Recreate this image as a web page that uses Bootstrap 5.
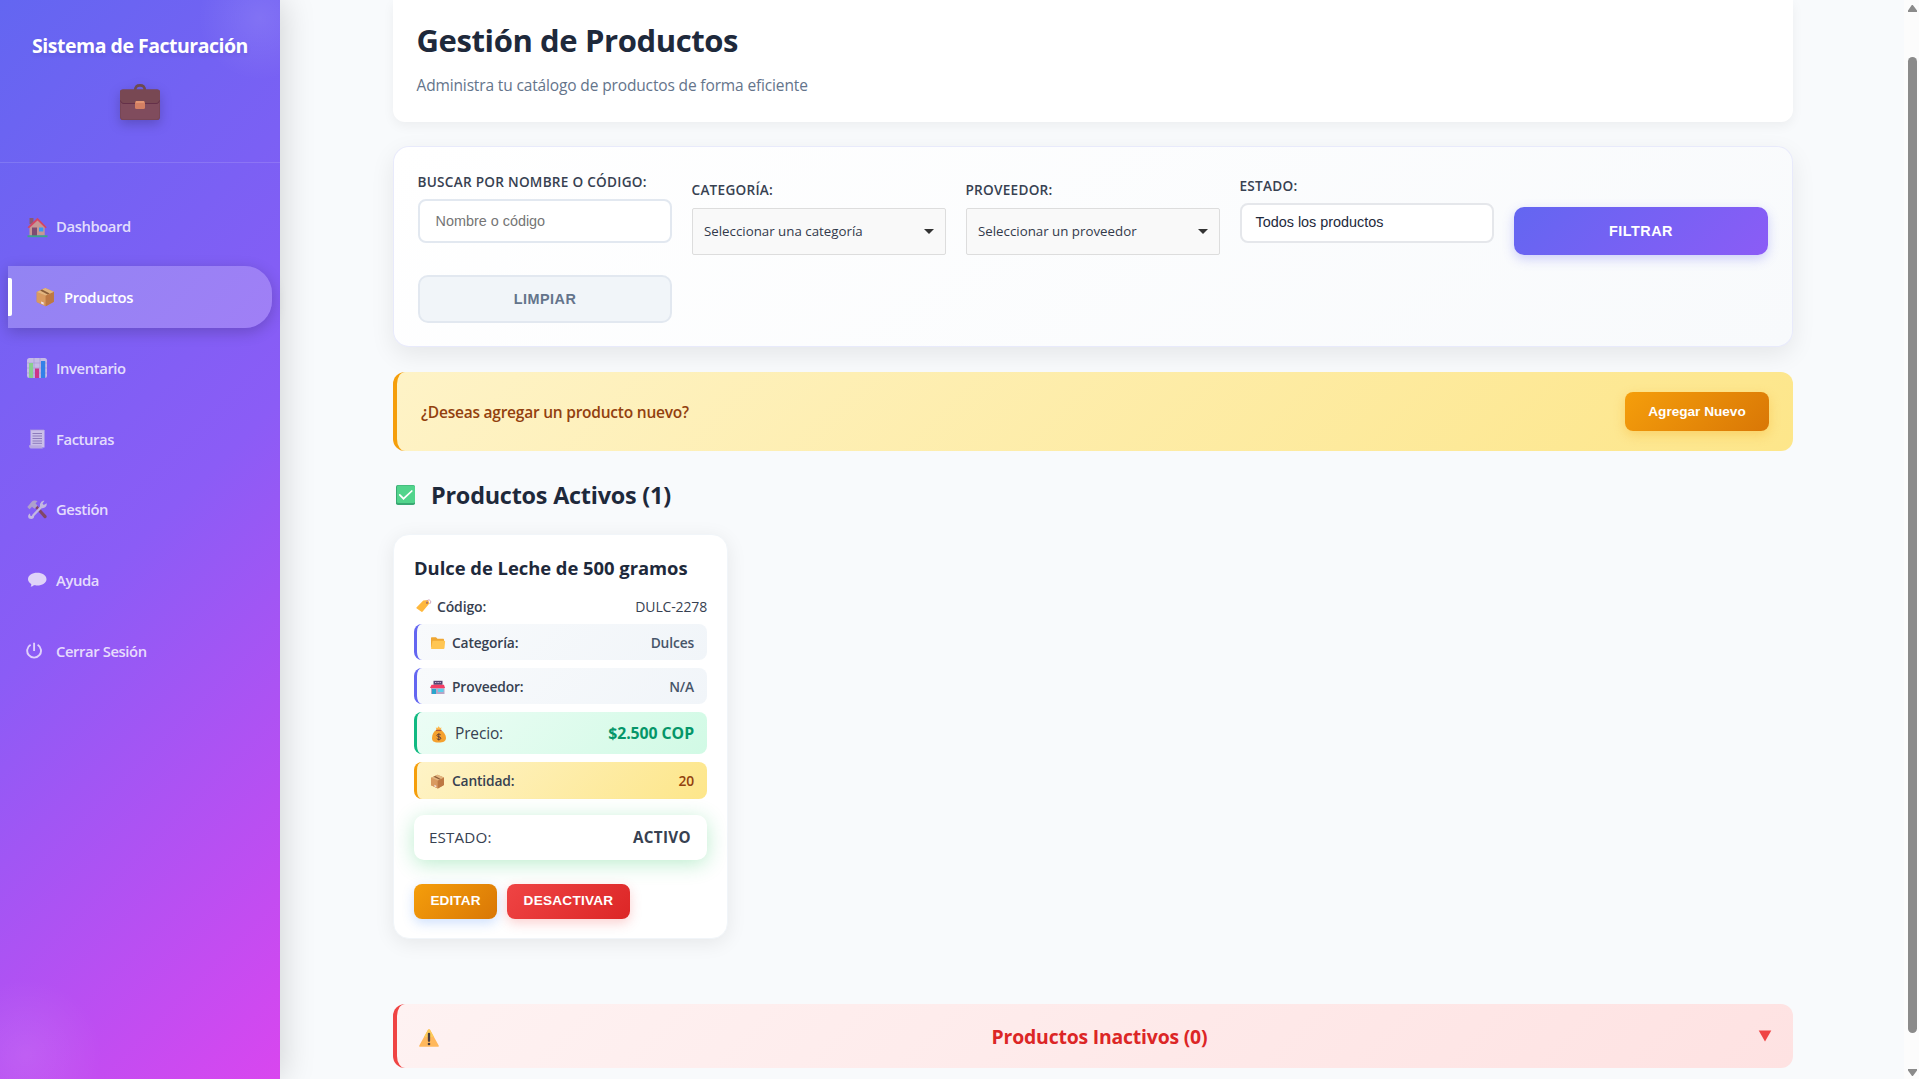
<!DOCTYPE html>
<html lang="es">
<head>
<meta charset="utf-8">
<meta name="viewport" content="width=device-width, initial-scale=1">
<title>Gestión de Productos</title>
<link href="https://cdn.jsdelivr.net/npm/bootstrap@5.3.0/dist/css/bootstrap.min.css" rel="stylesheet">
<style>
  body{font-family:"Open Sans","Noto Sans",sans-serif;background:#f8fafc;color:#1e293b;height:1079px;overflow:hidden}
  button,.ctl-arial{font-family:"Liberation Sans",Arial,sans-serif}
  svg{display:block;flex:none}

  /* sidebar */
  .side{width:280px;background:radial-gradient(circle 62px at 260px 18px,rgba(255,255,255,.1),transparent),radial-gradient(circle 76px at 26px 1055px,rgba(255,255,255,.09),transparent),linear-gradient(135deg,#6366f1 0%,#8b5cf6 50%,#d946ef 100%);box-shadow:4px 0 30px rgba(0,0,0,.15);z-index:2}
  .side-head{height:163px;padding-top:34px;border-bottom:1px solid rgba(255,255,255,.13)}
  .side-title{font-size:19.5px;line-height:24px;letter-spacing:-.49px;font-weight:700;color:#fff;text-shadow:0 2px 4px rgba(0,0,0,.1);margin:0 0 26px}
  .case{filter:drop-shadow(0 4px 6px rgba(0,0,0,.2))}
  .side-nav{padding-top:32.5px}
  .side-link{height:62px;margin-bottom:8.75px;padding-left:26px;gap:8px;color:rgba(255,255,255,.8);font-size:14.8px;font-weight:600;letter-spacing:-.4px;text-decoration:none}
  .side-link svg{opacity:.85}
  .side-link.on{position:relative;margin-left:8px;margin-right:8px;color:#fff;background:linear-gradient(135deg,#9284f3,#a07ff6);border-radius:0 27px 27px 0;box-shadow:0 4px 15px rgba(0,0,0,.2)}
  .side-link.on::before{content:"";position:absolute;left:0;top:12px;width:4px;height:38px;background:#fff;border-radius:0 2px 2px 0}
  .side-link.on svg{opacity:1}

  /* content */
  .content{padding:0 111px 0 113px}
  .head-box{height:122px;padding:20px 24px 0 23.5px;background:#fff;border-radius:0 0 12px 12px;box-shadow:0 4px 12px rgba(0,0,0,.05)}
  .head-box h1{font-size:31px;line-height:40px;font-weight:700;letter-spacing:-.39px;margin:0 0 13px}
  .head-box p{font-size:15.5px;line-height:24px;letter-spacing:-.14px;color:#64748b;margin:0}
  .filters{height:201px;margin-top:24px;padding:24px;border:1px solid rgba(99,102,241,.1);border-radius:16px;background:linear-gradient(145deg,#fff,#f8fafc);background-clip:padding-box;box-shadow:0 8px 25px rgba(0,0,0,.08);display:grid;grid-template-columns:repeat(5,1fr);grid-template-rows:84px 48px;gap:20px}
  .filters label{display:block;font-size:13.6px;line-height:20px;letter-spacing:.26px;font-weight:600;color:#374151;margin:0 0 0 -.5px}
  .f-a{padding-top:1px}.f-b{padding-top:9px}.f-c{padding-top:5px}
  .txt{height:43.5px;margin-top:7px;border:2px solid #e2e8f0;border-radius:8px;background:#fff;padding:0 15.5px;font-size:14.4px;width:100%}
  .txt::placeholder{color:#757575}
  .drop{height:47px;margin-top:8px;border:1px solid #ddd;border-radius:2px;background:#f9f9f9;padding:0 11px;font-size:13.3px;color:#333a4b}
  .drop i{border:5px solid transparent;border-top:5px solid #333;border-bottom:0}
  .sel{height:40px;margin-top:7px;border:2px solid #e5e7eb;border-radius:8px;background:#fff;padding:0 13.5px;font-size:14.4px}
  .act{height:48px;border:0;border-radius:10px;font-size:14.4px;font-weight:700;letter-spacing:.5px;padding:2px 0 0}
  .act-go{margin-top:36px;color:#fff;background:linear-gradient(135deg,#6366f1,#8b5cf6);box-shadow:0 4px 12px rgba(99,102,241,.3)}
  .act-clear{color:#64748b;background:#f1f5f9;border:2px solid #e2e8f0}
  .banner{height:79px;margin-top:25px;padding:0 24px;border-left:4px solid #f59e0b;border-radius:12px;background:linear-gradient(135deg,#fef3c7,#fde68a);color:#92400e}
  .banner p{font-size:15.5px;font-weight:600;letter-spacing:-.23px;margin:0;padding-top:2px}
  .btn-new{width:144px;height:39px;border:0;border-radius:8px;color:#fff;font-size:13.6px;font-weight:700;padding:2px 0 0;background:linear-gradient(135deg,#f59e0b,#d97706);box-shadow:0 4px 12px rgba(245,158,11,.3)}
  .sec{margin:26px 0 21px;padding-left:3px;gap:16px;height:36px}
  .sec h2{font-size:23.4px;line-height:36px;font-weight:700;letter-spacing:-.22px;margin:0}
  .prod{width:335px;height:405px;border:1px solid #f1f5f9;border-radius:16px;background:#fff;padding:20px 20px 0;box-shadow:0 4px 20px rgba(0,0,0,.08)}
  .prod h3{font-size:18.4px;line-height:26px;font-weight:700;letter-spacing:-.02px;margin:0 0 12px}
  .line{height:26px;margin-bottom:5px;font-size:14px;color:#374151;letter-spacing:-.15px}
  .line b,.strip b{font-weight:600}
  .strip{height:36px;margin-bottom:8px;padding:2px 13px 0 12px;border-left:3px solid #6366f1;border-radius:8px;background:linear-gradient(135deg,#f8fafc,#f1f5f9);font-size:13.8px;letter-spacing:-.15px;color:#374151}
  .strip svg{margin-right:6px}
  .strip span:last-child{font-weight:600;color:#475569}
  .strip.green{height:42px;border-color:#10b981;background:linear-gradient(135deg,#ecfdf5,#d1fae5);font-size:15.5px}
  .strip.green b{font-weight:500}
  .strip.green span:last-child{font-weight:700;color:#059669;font-size:15.8px;letter-spacing:-.05px}
  .strip.gold{height:37px;margin-bottom:16px;border-color:#f59e0b;background:linear-gradient(135deg,#fef3c7,#fde68a)}
  .strip.gold span:last-child{color:#92400e}
  .state{height:45px;margin-bottom:24px;padding:0 16px 0 15px;border-radius:10px;box-shadow:0 4px 20px rgba(34,197,94,.3);font-size:15.2px;letter-spacing:.15px;color:#374151;background:#fff}
  .state strong{letter-spacing:.35px}
  .mini{height:35px;border:0;border-radius:8px;color:#fff;font-size:13.6px;font-weight:700;padding:0 0 1px}
  .mini-e{width:83px;background:linear-gradient(135deg,#f59e0b,#d97706);box-shadow:0 4px 12px rgba(59,130,246,.25)}
  .mini-d{width:123px;background:linear-gradient(135deg,#ef4444,#dc2626);box-shadow:0 4px 12px rgba(239,68,68,.25)}
  .minis{gap:10px}
  .mini-e{letter-spacing:.1px}.mini-d{letter-spacing:.25px}
  .off{height:64px;margin-top:65px;padding:0 21px 0 22px;border-left:4px solid #ef4444;border-radius:12px;background:linear-gradient(135deg,#fef2f2,#fee2e2)}
  .off h2{font-size:19.4px;font-weight:700;letter-spacing:-.19px;color:#dc2626;margin:0;padding:2px 0 0 2px}

  .scroll{width:15px;background:#fcfcfc}
</style>
<script src="https://cdn.jsdelivr.net/npm/bootstrap@5.3.0/dist/js/bootstrap.bundle.min.js"></script>
</head>
<body>
<svg width="0" height="0" class="position-absolute">
  <symbol id="box" viewBox="0 0 20 20">
    <path d="M10 1 18.6 4.8v10L10.6 19.2 1.4 15V5z" fill="#c98a52"/>
    <path d="M1.4 5 10.4 8.6v10.6L1.4 15z" fill="#d99a60"/>
    <path d="M10.4 8.6 18.6 4.8v10l-8.2 4.4z" fill="#bd7843"/>
    <path d="M10 1 18.6 4.8 10.4 8.6 1.4 5z" fill="#e3b57f"/>
    <path d="M4.800 3.600 12.400 7.400 14.400 6.600 6.800 2.600z" fill="#8a5c37"/>
    <path d="m5.800 14.400 2.600 1.100v2.200l-2.600-1.100z" fill="#f1e1e1"/>
  </symbol>
</svg>
<div class="d-flex h-100">
  <aside class="side d-flex flex-column flex-shrink-0">
    <div class="side-head d-flex flex-column align-items-center">
      <h2 class="side-title text-nowrap">Sistema de Facturación</h2>
      <svg class="case" width="40" height="36" viewBox="0 0 40 36">
        <path d="M15.3 7C15 2.5 17 1.400 20 1.400S25 2.500 24.700 7" fill="none" stroke="#6c4a50" stroke-width="2.600"/>
        <rect y="5.500" width="40" height="30.500" rx="2.800" fill="#774656"/>
        <path d="M1 18.500c.5 1 1.500 1.500 3 1.500h32c1.500 0 2.500-.5 3-1.500V33a2 2 0 0 1-2 2H3a2 2 0 0 1-2-2z" fill="#804c5d"/>
        <path d="M0 8.300a2.800 2.800 0 0 1 2.800-2.800h34.400A2.800 2.800 0 0 1 40 8.300V16c0 2-1.500 3.500-3.500 3.500h-33C1.500 19.500 0 18 0 16z" fill="#784853"/>
        <path d="M.5 16.500c.5 1.800 1.500 3 3.500 3h32c2 0 3-1.200 3.500-3" fill="none" stroke="#653049"/>
        <rect x="15" y="17" width="10" height="8" rx="1.500" fill="#d37f63"/><path d="M16 18h8" stroke="#e79c77" stroke-width="1.500"/>
      </svg>
    </div>
    <nav class="side-nav">
      <a class="side-link d-flex align-items-center" href="#">
        <svg width="22" height="22" viewBox="0 0 22 22"><path d="M3.500 2h4v6h-4z" fill="#8a5960"/><path d="M3.500 10 11.500 3l7.200 7v9.500H3.500z" fill="#d6a184"/><path d="M1.500 11.300 11.500 1.800l9.300 9.500-1.300.9-8-7.700-8.400 7.700z" fill="#e4414c"/><path d="M6 11.500h5v8.500H6z" fill="#80485c"/><path d="M13 11.500h4.300v4H13z" fill="#2ea5f5"/><path d="M1.500 19.300h20v1.900h-20z" fill="#35b078"/></svg>
        <span>Dashboard</span></a>
      <a class="side-link on d-flex align-items-center" href="#">
        <svg width="22" height="20" viewBox="0 0 22 20"><use href="#box" x="1.300" width="20" height="20"/></svg>
        <span>Productos</span></a>
      <a class="side-link d-flex align-items-center" href="#">
        <svg width="22" height="22" viewBox="0 0 22 22"><rect x="1" y="1" width="20" height="20" rx="2.500" fill="#d3cbe4"/><path d="M1 6h20M1 11h20M1 16h20M8 1v20M14 1v20" stroke="#b0a3d2" stroke-width=".7"/><path d="M3 6h4v15H3z" fill="#8be37d"/><path d="M9 11.500h4V21H9z" fill="#db2f77"/><path d="M15 4h4.200v17H15z" fill="#2686e6"/></svg>
        <span>Inventario</span></a>
      <a class="side-link d-flex align-items-center" href="#">
        <svg width="22" height="22" viewBox="0 0 22 22"><path d="M4.500 2h14v17.500h-14z" fill="#d8d0e8"/><path d="M4.500 2h14" stroke="#b4a8d3" stroke-dasharray="1 1" stroke-width="1.500"/><path d="M6.500 5.500h9.500M6.500 8h9.500M6.500 10.500h9.500M6.500 13h9.500M6.500 15.300h9.500" stroke="#8f80b2" stroke-width="1"/><path d="M3 17.300h12.500c0 2 .8 3.200 2 3.200H5c-1.300 0-2-1.200-2-3.200z" fill="#c3b8dd"/></svg>
        <span>Facturas</span></a>
      <a class="side-link d-flex align-items-center" href="#">
        <svg width="22" height="22" viewBox="0 0 22 22"><path d="m9 8.500 2-2 9.500 10.300c.8 1-.9 3.200-2.200 2.400z" fill="#81434f"/><path d="m1.300 8 4.200-5c1.500-1.500 4-1.800 6-.8l-2 2 2 2.500-3 3-2.500-2-2.500 2.500z" fill="#b5acc6"/><path d="M3 19.500c-1.500-1.500-1-4 1-5l.3 2.300 1.500.3.700-1.500L14 7.500c-.5-3 1.500-6 4.500-5.700l-2 2.700 1.300 1.500 2.900-1.800c.6 3-2 5.500-5 5L8.200 17c0 2.500-2.200 3.500-5.200 2.500z" fill="#cfc8df"/></svg>
        <span>Gestión</span></a>
      <a class="side-link d-flex align-items-center" href="#">
        <svg width="22" height="22" viewBox="0 0 22 22"><path d="M11.200 3.800c5 0 9.300 2.700 9.300 6.400s-4.200 6.300-9.300 6.300c-1.400 0-2.200-.1-3.200-.4-.8 1-2 1.600-3.500 1.600.7-.9.900-1.700.7-2.800C3.200 13.800 2 12 2 10.200c0-3.700 4.200-6.400 9.200-6.400z" fill="#efe8f9"/></svg>
        <span>Ayuda</span></a>
      <a class="side-link d-flex align-items-center" href="#">
        <svg width="22" height="22" viewBox="0 0 22 22"><path d="M4.600 4.800a6.900 6.900 0 1 0 7 0M8.100 2.800v8.200" fill="none" stroke="#efe6fd" stroke-width="1.900"/></svg>
        <span>Cerrar Sesión</span></a>
    </nav>
  </aside>

  <main class="content flex-grow-1">
    <header class="head-box">
      <h1>Gestión de Productos</h1>
      <p>Administra tu catálogo de productos de forma eficiente</p>
    </header>

    <form class="filters">
      <div class="f-a d-flex flex-column"><label for="q">BUSCAR POR NOMBRE O CÓDIGO:</label>
        <input id="q" class="txt ctl-arial" type="text" placeholder="Nombre o código"></div>
      <div class="f-b"><label>CATEGORÍA:</label>
        <div class="drop d-flex align-items-center justify-content-between"><span>Seleccionar una categoría</span><i></i></div></div>
      <div class="f-b"><label>PROVEEDOR:</label>
        <div class="drop d-flex align-items-center justify-content-between"><span>Seleccionar un proveedor</span><i></i></div></div>
      <div class="f-c"><label>ESTADO:</label>
        <div class="sel ctl-arial d-flex align-items-center">Todos los productos</div></div>
      <button type="button" class="act act-go">FILTRAR</button>
      <button type="button" class="act act-clear">LIMPIAR</button>
    </form>

    <section class="banner d-flex align-items-center justify-content-between">
      <p>¿Deseas agregar un producto nuevo?</p>
      <button type="button" class="btn-new">Agregar Nuevo</button>
    </section>

    <div class="sec d-flex align-items-center">
      <svg width="19" height="20" viewBox="0 0 19 20"><rect width="19" height="20" rx="1.800" fill="#3aa873"/><rect x="1" y=".5" width="18" height="17.500" rx="1.500" fill="#52d48c"/><path d="m3.700 9.800 3.800 3.900 8.300-7.700" fill="none" stroke="#fff" stroke-width="1.700" stroke-linecap="round"/></svg>
      <h2>Productos Activos (1)</h2>
    </div>

    <article class="prod">
      <h3>Dulce de Leche de 500 gramos</h3>
      <div class="line d-flex align-items-center justify-content-between">
        <span class="d-flex align-items-center"><svg width="23" height="14" viewBox="0 0 23 14"><g transform="translate(1)"><path d="M1.700 8.200 8.300 1.500 13 1l1.500 3.200-6.800 8.200c-.5.6-1 .7-1.600.1L1.800 9.600c-.5-.5-.6-.9-.1-1.400z" fill="#ffb83d"/><circle cx="12" cy="3.800" r="1" fill="#995d4d"/><path d="M12 3.800c-1-2 1-3.300 2.600-2.700S16.200 4 14.500 5" fill="none" stroke="#c893ac" stroke-width=".8"/></g></svg><b>Código:</b></span>
        <span>DULC-2278</span>
      </div>
      <div class="strip d-flex align-items-center justify-content-between">
        <span class="d-flex align-items-center"><svg width="17" height="14" viewBox="0 0 17 14"><path d="M2 2.200c0-.6.300-1 1-1h4l1.500 1.600H14c.6 0 1 .4 1 1V11H2z" fill="#efa733"/><path d="M3.500 4.800H15c.8 0 1.200.3 1.100 1L15.500 12c-.1.700-.4 1-1 1H3c-.7 0-1-.3-1-1z" fill="#ffc653"/></svg><b>Categoría:</b></span>
        <span>Dulces</span>
      </div>
      <div class="strip d-flex align-items-center justify-content-between">
        <span class="d-flex align-items-center"><svg width="17" height="15" viewBox="0 0 17 15"><path d="M4.500.8h9v4h-9z" fill="#574572"/><path d="M6 2.500h6" stroke="#c8b8da" stroke-dasharray="1 .6"/><path d="M2 7h13.500v7H2z" fill="#b8a5c5"/><path d="M2.500 4.800H15L16 8H1z" fill="#f43c63"/><path d="M3 9h4v5H3z" fill="#28a5cc"/><path d="M9 9h5.500v3H9z" fill="#5ad0ec"/></svg><b>Proveedor:</b></span>
        <span>N/A</span>
      </div>
      <div class="strip green d-flex align-items-center justify-content-between">
        <span class="d-flex align-items-center"><svg width="20" height="17" viewBox="0 0 20 17"><path d="M6.200 4.400h6.600c2 1.500 4.200 4.500 4.200 7.500S14.500 16.500 9.500 16.500 3 15 3 12s1.500-6 3.200-7.600z" fill="#f5a12e"/><path d="M6.800 1.500 8.300 2 9.600.3 11 2l1.600-.4-1 2.400H7.600z" fill="#ffb84a"/><path d="M7 4.400h5.500" stroke="#b45b32" stroke-width="1.300"/><path d="M11.700 8.800c-1-1-3.800-.9-3.800.7 0 1.700 4 .9 4 2.700 0 1.600-3 1.700-4.100.5M9.800 7.500v7" fill="none" stroke="#633f36"/></svg><b>Precio:</b></span>
        <span>$2.500 COP</span>
      </div>
      <div class="strip gold d-flex align-items-center justify-content-between">
        <span class="d-flex align-items-center"><svg width="17" height="15" viewBox="0 0 17 15"><use href="#box" x="1" width="15" height="15"/></svg><b>Cantidad:</b></span>
        <span>20</span>
      </div>
      <div class="state d-flex align-items-center justify-content-between"><span>ESTADO:</span><strong>ACTIVO</strong></div>
      <div class="minis d-flex">
        <button type="button" class="mini mini-e">EDITAR</button>
        <button type="button" class="mini mini-d">DESACTIVAR</button>
      </div>
    </article>

    <section class="off d-flex align-items-center justify-content-between">
      <svg class="mt-1" width="20" height="18" viewBox="0 0 20 18"><path d="M9 .8c.4-.8 1.600-.8 2 0l8.700 15.600c.3.700 0 1.300-.8 1.300H1.100c-.8 0-1.100-.6-.8-1.300z" fill="#ffb85c"/><path d="M9 .8c.4-.8 1.600-.8 2 0l4 7.200H5z" fill="#fccb5a"/><path d="M10 4.800v7" stroke="#483c3f" stroke-width="2.300" stroke-linecap="round"/><circle cx="10" cy="15" r="1.300" fill="#483c3f"/></svg>
      <h2>Productos Inactivos (0)</h2>
      <svg width="14" height="12" viewBox="0 0 14 12"><path d="M.7.500h12.600L7 11.500z" fill="#ef4444"/></svg>
    </section>
  </main>

  <div class="scroll flex-shrink-0">
    <svg width="15" height="1079" viewBox="0 0 15 1079" fill="#8b8b8b"><path d="M7.800 5h1L13 10.500V12H4v-1.500zM4 1069h9v1.500L8.900 1076H8L4 1070.500z"/><rect x="4" y="57" width="9" height="976" rx="4.500"/></svg>
  </div>
</div>
</body>
</html>
